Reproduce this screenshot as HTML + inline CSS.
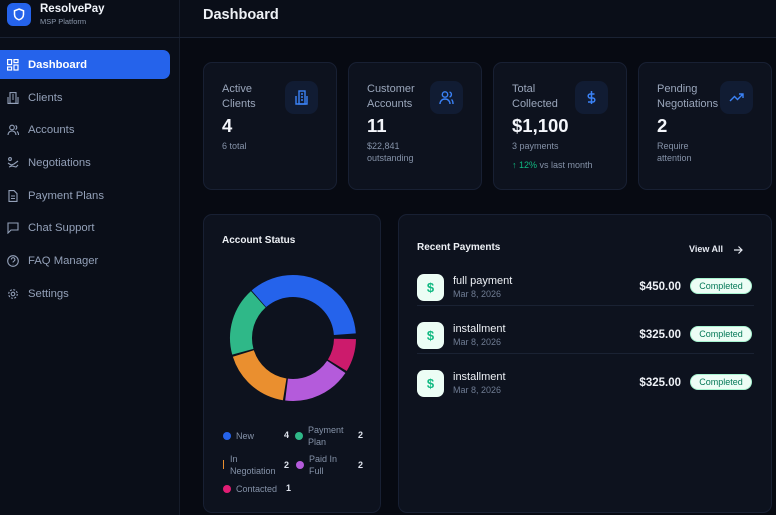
<!DOCTYPE html>
<html><head><meta charset="utf-8"><style>
*{box-sizing:border-box;margin:0;padding:0}
body{width:776px;height:515px;overflow:hidden;background:#070a12;font-family:"Liberation Sans",sans-serif;color:#e6eaf2;position:relative}
.side{position:absolute;left:0;top:0;width:180px;height:515px;background:#0a0e18;border-right:1px solid #161c2a}
.hdr{position:absolute;left:180px;top:0;right:0;height:38px;background:#0a0e18;border-bottom:1px solid #1a2233}
.sideline{position:absolute;left:0;top:37px;width:180px;height:1px;background:#1a2233}
.logo{position:absolute;left:7px;top:3px;width:24px;height:23px;border-radius:6px;background:#2563eb}
.brand{position:absolute;left:40px;top:3px;font-size:11.5px;font-weight:bold;color:#f1f4fa}
.sub{position:absolute;left:40px;top:17px;font-size:7.5px;color:#8b97ab}
.nav{position:absolute;left:0;width:170px;height:29px;font-size:11.3px;color:#93a0b8;display:flex;align-items:center;padding-left:28px;padding-top:1px}
.nav svg{position:absolute;left:7px;top:9px}
.nav.act{background:#2563eb;color:#fff;font-weight:bold;border-radius:0 7px 7px 0}
.card{position:absolute;top:62px;width:134px;height:128px;background:#0d121e;border:1px solid #182033;border-radius:9px}
.card .l{position:absolute;left:18px;top:19px;font-size:11px;line-height:15px;color:#9aa6bb}
.card .v{position:absolute;left:18px;top:52px;font-size:18.5px;font-weight:bold;color:#f4f6fb}
.card .s{position:absolute;left:18px;top:77px;font-size:9px;line-height:12px;color:#8592a8}
.ib{position:absolute;left:81px;top:18px;width:33px;height:33px;border-radius:9px;background:#111c33}
.ib svg{position:absolute;left:9px;top:9px}
.panel{position:absolute;top:214px;height:299px;background:#0d121e;border:1px solid #182033;border-radius:9px}
.lg{position:absolute;font-size:9px;color:#8592a8;line-height:12px}
.dot{position:absolute;width:8px;height:8px;border-radius:50%}
.n{position:absolute;font-size:9px;font-weight:bold;color:#dfe4ee}
.row{position:absolute;left:18px;width:337px;height:48px}
.ic{position:absolute;left:0;top:0;width:27px;height:27px;border-radius:7px;background:#ecfdf5;color:#10b981;font-size:13px;font-weight:bold;text-align:center;line-height:27px}
.t1{position:absolute;left:36px;top:1px;font-size:11px;color:#eef1f6}
.t2{position:absolute;left:36px;top:15px;font-size:9px;color:#6f7c93}
.amt{position:absolute;right:73px;top:7px;font-size:11.5px;font-weight:bold;color:#eef1f6}
.bd{position:absolute;right:2px;top:4px;width:62px;height:16px;border-radius:8px;background:#ecfdf5;border:1px solid #a7f3d0;color:#047857;font-size:9px;text-align:center;line-height:14px}
.sep{position:absolute;left:18px;width:337px;height:1px;background:#1a2233}
</style></head><body>
<div class="side">
<div class="logo"><svg width="24" height="23" viewBox="0 0 24 23"><path d="M12 6l4.5 1.8v3.6c0 2.8-2 4.6-4.5 5.4-2.5-.8-4.5-2.6-4.5-5.4V7.8z" fill="none" stroke="#fff" stroke-width="1.5"/></svg></div>
<div class="brand">ResolvePay</div><div class="sub">MSP Platform</div>
<div class="sideline"></div>
<div class="nav act" style="top:50px"><svg width="12" height="12" viewBox="0 0 12 12" fill="none" stroke="#fff" stroke-width="1.2"><rect x=".6" y=".6" width="4" height="5"/><rect x="7" y=".6" width="4" height="3"/><rect x="7" y="6" width="4" height="5"/><rect x=".6" y="8" width="4" height="3"/></svg>Dashboard</div>
<div class="nav" style="top:83px"><svg width="12" height="12" viewBox="0 0 12 12" fill="none" stroke="#93a0b8" stroke-width="1.1"><rect x="3" y=".6" width="6" height="10.8"/><path d="M1 5v6.4h10V5M5 3h2M5 5h2M5 7h2"/></svg>Clients</div>
<div class="nav" style="top:115px"><svg width="12" height="12" viewBox="0 0 12 12" fill="none" stroke="#93a0b8" stroke-width="1.1"><circle cx="5" cy="3.5" r="2.3"/><path d="M1 11c0-2.5 1.8-4 4-4s4 1.5 4 4M8.5 1.5a2.2 2.2 0 010 4M10 7.5c1 .6 1.5 2 1.5 3.5"/></svg>Accounts</div>
<div class="nav" style="top:148px"><svg width="12" height="12" viewBox="0 0 12 12" fill="none" stroke="#93a0b8" stroke-width="1.1"><circle cx="3" cy="2" r="1.4"/><path d="M1 6l3 2 3-1 4-3M2 10l3-1 4 1 2-2"/></svg>Negotiations</div>
<div class="nav" style="top:181px"><svg width="12" height="12" viewBox="0 0 12 12" fill="none" stroke="#93a0b8" stroke-width="1.1"><path d="M2 .6h5l3 3v7.8H2z M4 6h4M4 8.5h4"/></svg>Payment Plans</div>
<div class="nav" style="top:213px"><svg width="12" height="12" viewBox="0 0 12 12" fill="none" stroke="#93a0b8" stroke-width="1.1"><path d="M1 1h10v7H4l-3 3z"/></svg>Chat Support</div>
<div class="nav" style="top:246px"><svg width="12" height="12" viewBox="0 0 12 12" fill="none" stroke="#93a0b8" stroke-width="1.1"><circle cx="6" cy="6" r="5.3"/><path d="M4.3 4.5a1.8 1.8 0 113 1.3c-.8.5-1.3.8-1.3 1.7M6 9v.2"/></svg>FAQ Manager</div>
<div class="nav" style="top:279px"><svg width="12" height="12" viewBox="0 0 12 12" fill="none" stroke="#93a0b8" stroke-width="1.1"><circle cx="6" cy="6" r="1.8"/><circle cx="6" cy="6" r="4.3" stroke-dasharray="2 1.4"/></svg>Settings</div>
</div>
<div class="hdr"><div style="position:absolute;left:23px;top:7px;font-size:14.5px;font-weight:bold;color:#eef1f6">Dashboard</div></div>

<div class="card" style="left:203px"><div class="l">Active<br>Clients</div><div class="ib"><svg width="15" height="15" viewBox="0 0 15 15" fill="none" stroke="#3b82f6" stroke-width="1.4"><rect x="5" y="1" width="6" height="13"/><path d="M2 6v8h11V6M7 4h2M7 7h2M7 10h2"/></svg></div><div class="v">4</div><div class="s">6 total</div></div>
<div class="card" style="left:348px"><div class="l">Customer<br>Accounts</div><div class="ib"><svg width="15" height="15" viewBox="0 0 15 15" fill="none" stroke="#3b82f6" stroke-width="1.4"><circle cx="6" cy="4.5" r="2.7"/><path d="M1 14c0-3 2.2-5 5-5s5 2 5 5M10.5 2a2.6 2.6 0 010 5M12.5 9.5c1 .8 1.5 2.5 1.5 4.5"/></svg></div><div class="v">11</div><div class="s">$22,841<br>outstanding</div></div>
<div class="card" style="left:493px"><div class="l">Total<br>Collected</div><div class="ib"><svg width="15" height="15" viewBox="0 0 15 15" fill="none" stroke="#3b82f6" stroke-width="1.5"><path d="M7.5 1v13M10.5 4H6.2a2 2 0 000 4h2.6a2 2 0 010 4H4"/></svg></div><div class="v">$1,100</div><div class="s">3 payments</div><div style="position:absolute;left:18px;top:97px;font-size:9px;color:#8592a8"><span style="color:#10b981">↑ 12%</span> vs last month</div></div>
<div class="card" style="left:638px"><div class="l">Pending<br>Negotiations</div><div class="ib"><svg width="15" height="15" viewBox="0 0 15 15" fill="none" stroke="#3b82f6" stroke-width="1.4"><path d="M1 11l4.5-4.5 3 3L14 4M10 4h4v4"/></svg></div><div class="v">2</div><div class="s">Require<br>attention</div></div>

<div class="panel" style="left:203px;width:178px">
<div style="position:absolute;left:18px;top:20px;font-size:10px;font-weight:bold;color:#eef1f6">Account Status</div>
<svg style="position:absolute;left:0;top:0" width="178" height="250" viewBox="203 214 178 250">
<g fill="none" stroke-width="22">
<circle cx="292" cy="337" r="52" stroke="#2563eb" stroke-dasharray="115 400" transform="rotate(-131 292 337)"/>
<circle cx="292" cy="337" r="52" stroke="#e11d74" stroke-opacity=".9" stroke-dasharray="27.7 400" transform="rotate(1 292 337)"/>
<circle cx="292" cy="337" r="52" stroke="#b45bdb" stroke-dasharray="57.5 400" transform="rotate(33.7 292 337)"/>
<circle cx="292" cy="337" r="52" stroke="#ea8f2f" stroke-dasharray="57.5 400" transform="rotate(99.2 292 337)"/>
<circle cx="292" cy="337" r="52" stroke="#2fb888" stroke-dasharray="57.5 400" transform="rotate(164.7 292 337)"/>
</g></svg>
<div class="dot" style="left:19px;top:217px;background:#2563eb"></div><div class="lg" style="left:32px;top:215px">New</div><div class="n" style="left:80px;top:215px">4</div>
<div class="dot" style="left:91px;top:217px;background:#2fb888"></div><div class="lg" style="left:104px;top:209px">Payment<br>Plan</div><div class="n" style="left:154px;top:215px">2</div>
<div style="position:absolute;left:19px;top:245px;width:1px;height:9px;background:#ea8f2f"></div><div class="lg" style="left:26px;top:238px">In<br>Negotiation</div><div class="n" style="left:80px;top:245px">2</div>
<div class="dot" style="left:92px;top:246px;background:#b45bdb"></div><div class="lg" style="left:105px;top:238px">Paid In<br>Full</div><div class="n" style="left:154px;top:245px">2</div>
<div class="dot" style="left:19px;top:270px;background:#e11d74"></div><div class="lg" style="left:32px;top:268px">Contacted</div><div class="n" style="left:82px;top:268px">1</div>
</div>

<div class="panel" style="left:398px;width:374px">
<div style="position:absolute;left:18px;top:27px;font-size:10px;font-weight:bold;color:#eef1f6">Recent Payments</div>
<div style="position:absolute;left:290px;top:29px;font-size:9px;font-weight:bold;color:#e6eaf2">View All</div>
<svg style="position:absolute;left:334px;top:30px" width="10" height="10" viewBox="0 0 10 10" fill="none" stroke="#e6eaf2" stroke-width="1.2"><path d="M1 5h8M5.5 1.5L9 5 5.5 8.5"/></svg>
<div class="row" style="top:59px"><div class="ic">$</div><div class="t1">full payment</div><div class="t2">Mar 8, 2026</div><div class="amt">$450.00</div><div class="bd">Completed</div></div>
<div class="sep" style="top:90px"></div>
<div class="row" style="top:107px"><div class="ic">$</div><div class="t1">installment</div><div class="t2">Mar 8, 2026</div><div class="amt">$325.00</div><div class="bd">Completed</div></div>
<div class="sep" style="top:138px"></div>
<div class="row" style="top:155px"><div class="ic">$</div><div class="t1">installment</div><div class="t2">Mar 8, 2026</div><div class="amt">$325.00</div><div class="bd">Completed</div></div>
</div>
</body></html>
